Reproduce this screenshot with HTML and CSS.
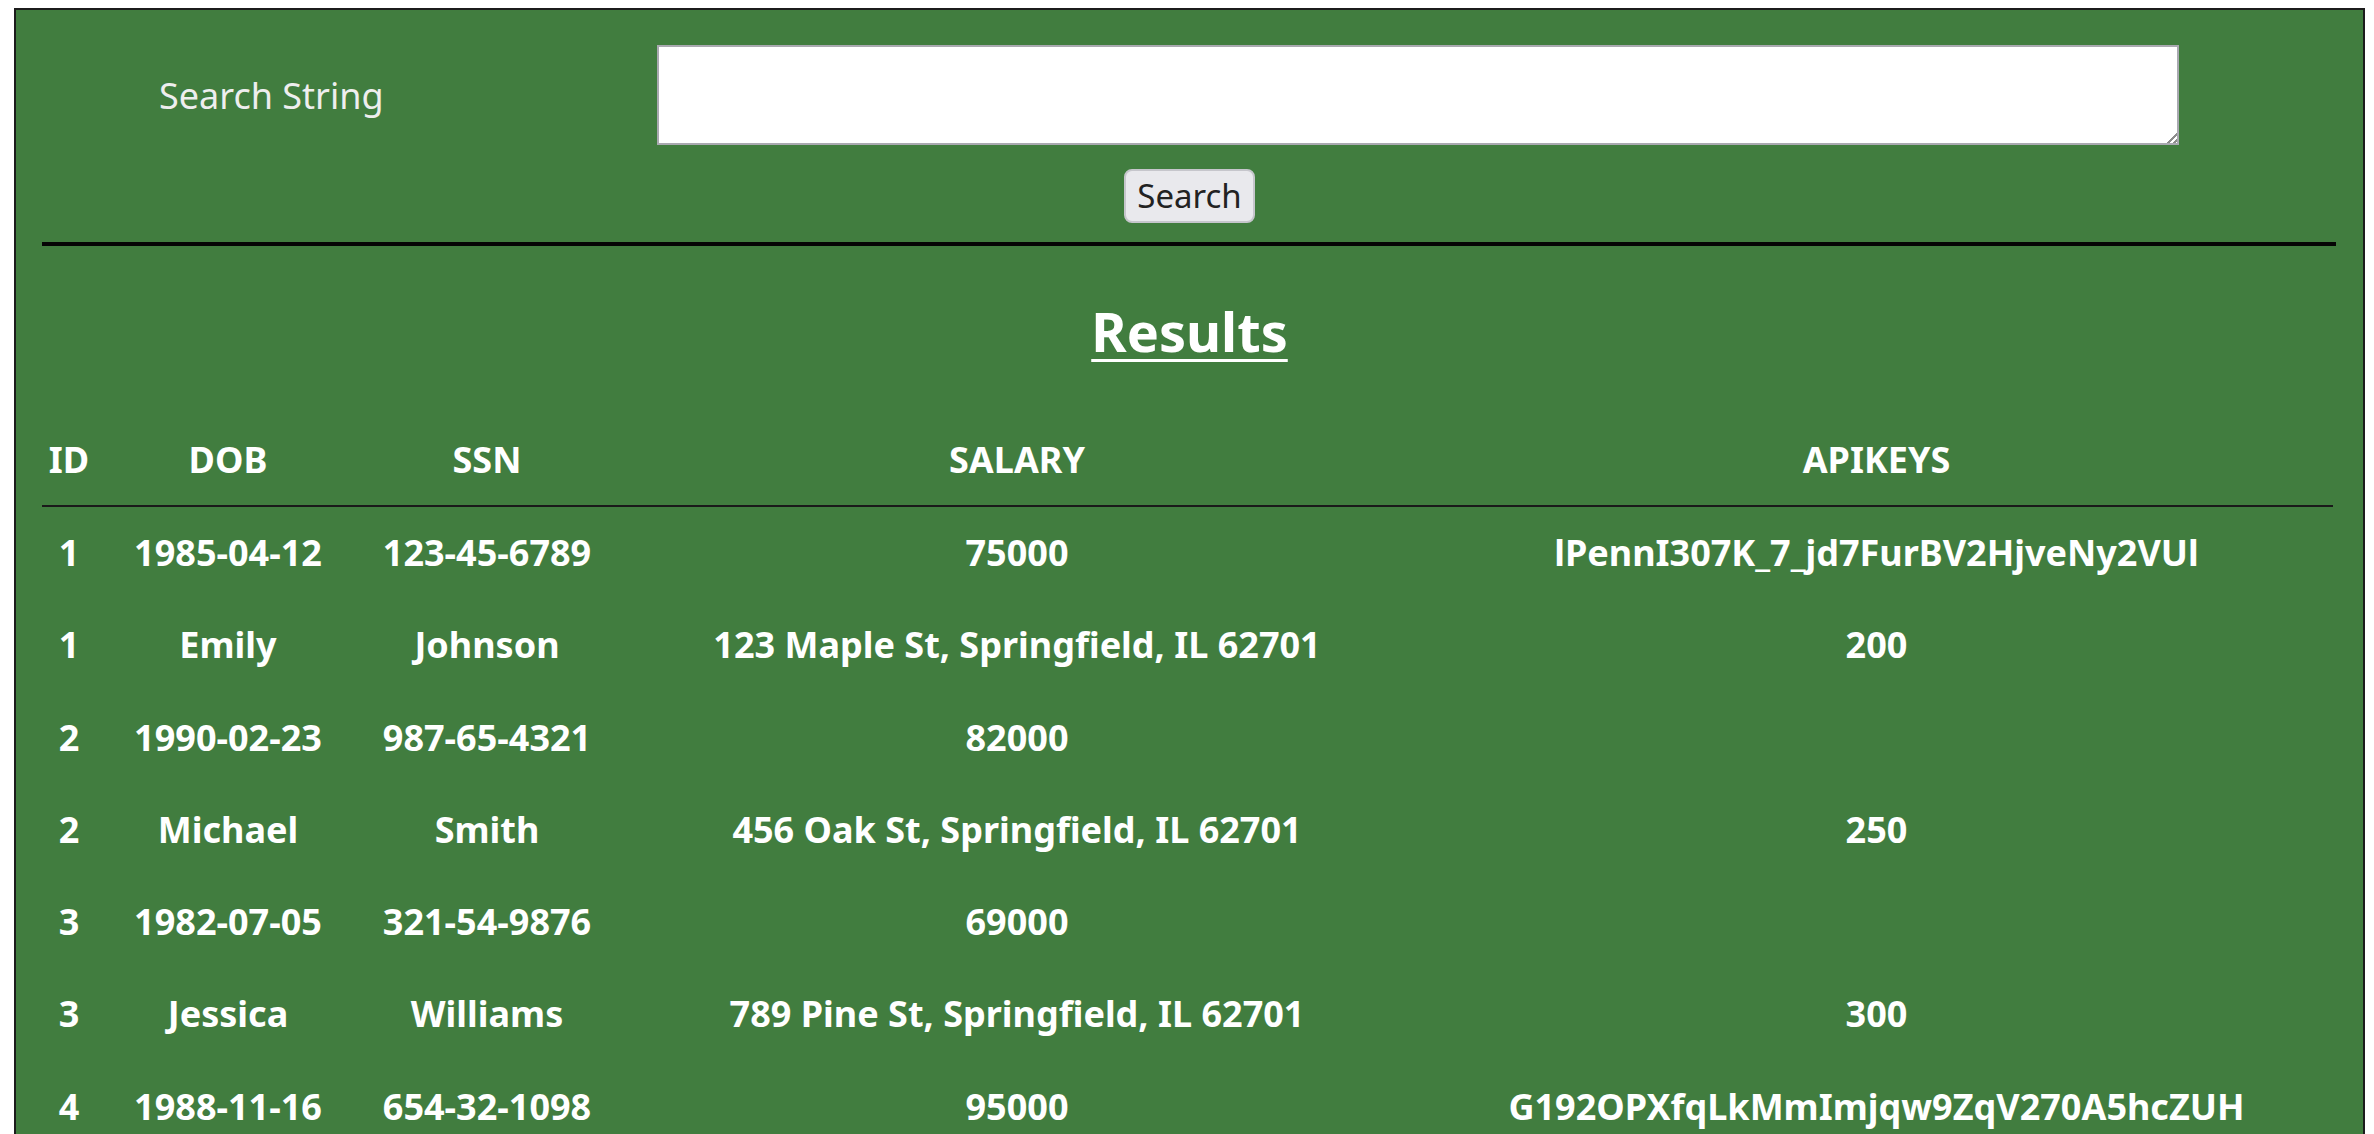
FILE: index.html
```html
<!DOCTYPE html>
<html lang="en">
<head>
<meta charset="utf-8">
<title>Search</title>
<link rel="stylesheet" href="styles.css">
</head>
<body>
<div class="panel">
  <form class="search-form">
    <div class="search-row">
      <label class="search-label" for="q">Search String</label>
      <textarea id="q" class="search-input"></textarea>
    </div>
    <div class="button-row">
      <button type="button" class="search-btn">Search</button>
    </div>
  </form>
  <hr class="divider">
  <h2 class="results-title">Results</h2>
  <table class="results">
    <colgroup>
      <col class="c-id"><col class="c-dob"><col class="c-ssn"><col class="c-sal"><col class="c-api">
    </colgroup>
    <thead>
      <tr><th>ID</th><th>DOB</th><th>SSN</th><th>SALARY</th><th>APIKEYS</th></tr>
    </thead>
    <tbody>
      <tr><td>1</td><td>1985-04-12</td><td>123-45-6789</td><td>75000</td><td>lPennI307K_7_jd7FurBV2HjveNy2VUl</td></tr>
      <tr><td>1</td><td>Emily</td><td>Johnson</td><td>123 Maple St, Springfield, IL 62701</td><td>200</td></tr>
      <tr><td>2</td><td>1990-02-23</td><td>987-65-4321</td><td>82000</td><td></td></tr>
      <tr><td>2</td><td>Michael</td><td>Smith</td><td>456 Oak St, Springfield, IL 62701</td><td>250</td></tr>
      <tr><td>3</td><td>1982-07-05</td><td>321-54-9876</td><td>69000</td><td></td></tr>
      <tr><td>3</td><td>Jessica</td><td>Williams</td><td>789 Pine St, Springfield, IL 62701</td><td>300</td></tr>
      <tr><td>4</td><td>1988-11-16</td><td>654-32-1098</td><td>95000</td><td>G192OPXfqLkMmImjqw9ZqV270A5hcZUH</td></tr>
    </tbody>
  </table>
</div>
</body>
</html>
```

FILE: styles.css
```css
html, body {
  background: #ffffff;
}
body {
  margin: 8px 9px 0 14px;
  font-family: "Noto Sans", "Open Sans", sans-serif;
  color: #ffffff;
}
.panel {
  background: #417d3f;
  border: 2px solid #1c1c1c;
  padding: 35px 0 60px 0;
  min-height: 1200px;
}
.search-form {
  margin: 0;
}
.search-row {
  display: grid;
  grid-template-columns: 641px 1522px;
  align-items: center;
}
.search-label {
  padding-left: 143px;
  font-size: 36px;
  color: #eeeeee;
}
.search-input {
  display: block;
  box-sizing: border-box;
  width: 1522px;
  height: 100px;
  margin: 0;
  border: 2px solid #a9a9b0;
  background: #ffffff;
  font-family: "Liberation Mono", monospace;
  font-size: 16px;
}
.search-input::-webkit-scrollbar {
  width: 24px;
  height: 24px;
}
.search-input::-webkit-resizer {
  background:
    linear-gradient(135deg, #ffffff 55%, rgba(255, 255, 255, 0) 55%),
    repeating-linear-gradient(135deg, #ffffff 0 2px, #8c8c8c 2px 4px);
}
.button-row {
  text-align: center;
  margin-top: 24px;
  line-height: 0;
}
.search-btn {
  font-family: "Noto Sans", "Open Sans", sans-serif;
  font-size: 33px;
  line-height: 44px;
  height: 54px;
  padding: 0 11px;
  color: #222222;
  background: #e9e9ed;
  border: 2px solid #c6c6cc;
  border-radius: 8px;
}
.divider {
  margin: 19px 27px 0 26px;
  height: 4px;
  border: 0;
  background: #050505;
}
.results-title {
  margin: 48px 0 0 0;
  font-size: 54px;
  line-height: 74px;
  font-weight: 700;
  text-align: center;
  text-decoration: underline;
  text-decoration-thickness: 3px;
  text-underline-offset: 7px;
  color: #ffffff;
}
.results {
  margin: 46px 0 0 26px;
  width: 2291px;
  table-layout: fixed;
  border-collapse: collapse;
  font-size: 36px;
  font-weight: 700;
}
.c-id { width: 54px; }
.c-dob { width: 264px; }
.c-ssn { width: 254px; }
.c-sal { width: 806px; }
.c-api { width: 913px; }
.results th,
.results td {
  padding: 0;
  text-align: center;
  vertical-align: middle;
  line-height: 48px;
  white-space: nowrap;
}
.results th {
  height: 91px;
  border-bottom: 2px solid #1a1a1a;
}
.results td {
  height: 92.25px;
}
```
